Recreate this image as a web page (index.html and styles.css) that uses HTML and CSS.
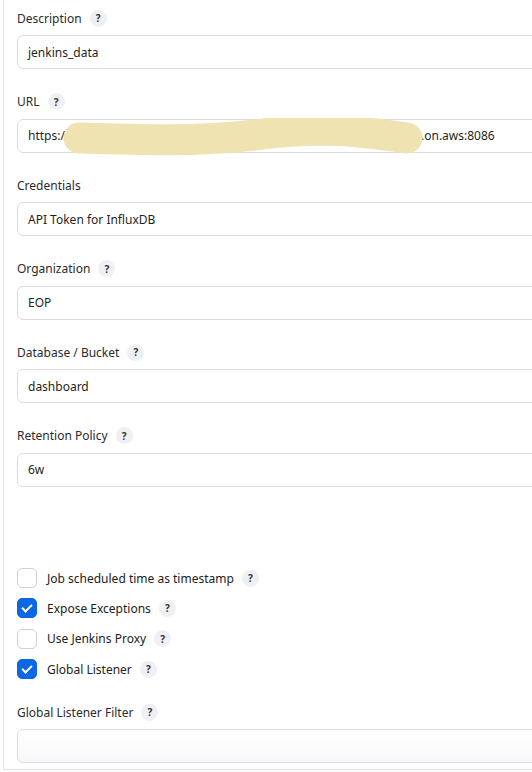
FILE: index.html
```html
<!DOCTYPE html>
<html lang="en">
<head>
    <meta charset="UTF-8">
    <meta name="viewport" content="width=device-width, initial-scale=1.0">
    <title>InfluxDB target</title>
    <link rel="stylesheet" href="styles.css">
</head>
<body>
  <div class="panel">
    <div class="field">
      <div class="label">Description <span class="help">?</span></div>
      <div class="input">jenkins_data</div>
    </div>
    <div class="field">
      <div class="label">URL <span class="help">?</span></div>
      <div class="input url">
        <span class="scheme">https:/</span>
        <span>.on.aws:8086</span>
        <svg class="blot" width="380" height="40" viewBox="0 0 380 40">
          <path d="M16 20 C 80 22, 140 24, 200 16 S 300 14, 344 20" stroke="#efe3b2" stroke-width="31" stroke-linecap="round" fill="none"/>
        </svg>
      </div>
    </div>
    <div class="field">
      <div class="label">Credentials</div>
      <div class="input">API Token for InfluxDB</div>
    </div>
    <div class="field">
      <div class="label">Organization <span class="help">?</span></div>
      <div class="input">EOP</div>
    </div>
    <div class="field">
      <div class="label">Database / Bucket <span class="help">?</span></div>
      <div class="input">dashboard</div>
    </div>
    <div class="field">
      <div class="label">Retention Policy <span class="help">?</span></div>
      <div class="input">6w</div>
    </div>

    <div class="checks">
      <div class="check"><span class="box"></span>Job scheduled time as timestamp <span class="help">?</span></div>
      <div class="check"><span class="box on"></span>Expose Exceptions <span class="help">?</span></div>
      <div class="check"><span class="box"></span>Use Jenkins Proxy <span class="help">?</span></div>
      <div class="check"><span class="box on"></span>Global Listener <span class="help">?</span></div>
    </div>

    <div class="field last">
      <div class="label">Global Listener Filter <span class="help">?</span></div>
      <div class="input filter"></div>
    </div>
  </div>
</body>
</html>
```
FILE: styles.css
```css
*{
    margin: 0;
    padding: 0;
    box-sizing: border-box;
}
body{
    background-color: #fff;
    font-family: "Noto Sans", "Open Sans", sans-serif;
    font-size: 12px;
    color: #222;
    overflow: hidden;
}
.panel{
    margin-left: 3px;
    width: 580px;
    height: 770px;
    border-left: 1px solid #e4e4e8;
    border-bottom: 1px solid #e4e4e8;
    padding: 8px 0 0 13px;
}
.field{
    margin-bottom: 22.6px;
}
.label{
    height: 20px;
    display: flex;
    align-items: center;
    gap: 8px;
    margin-bottom: 7px;
    color: #2b2b2e;
}
.help{
    display: inline-flex;
    justify-content: center;
    align-items: center;
    width: 17px;
    height: 17px;
    border-radius: 50%;
    background-color: #eff0f4;
    font-size: 10px;
    font-weight: 700;
    color: #333;
}
.input{
    height: 34px;
    border: 1px solid #dcdce0;
    border-radius: 6px;
    display: flex;
    align-items: center;
    padding-left: 10px;
    color: #1f1f22;
    white-space: nowrap;
}
.url{
    position: relative;
}
.scheme{
    width: 393px;
}
.blot{
    position: absolute;
    left: 45px;
    top: -2px;
}
.checks{
    margin-top: 76px;
    margin-bottom: 18px;
}
.check{
    height: 30.3px;
    display: flex;
    align-items: center;
    gap: 8px;
    color: #222;
}
.box{
    width: 20px;
    height: 20px;
    border: 1px solid #cfcfd4;
    border-radius: 5px;
    background-color: #fff;
    margin-right: 2px;
    position: relative;
}
.box.on{
    background-color: #0b67e3;
    border-color: #0b67e3;
}
.box.on::after{
    content: "";
    position: absolute;
    left: 6px;
    top: 3px;
    width: 4px;
    height: 8px;
    border: solid #fff;
    border-width: 0 2px 2px 0;
    transform: rotate(45deg);
}
.field.last{
    margin-bottom: 0;
}
.filter{
    background: linear-gradient(#fff, #f8f8fa);
}
```
